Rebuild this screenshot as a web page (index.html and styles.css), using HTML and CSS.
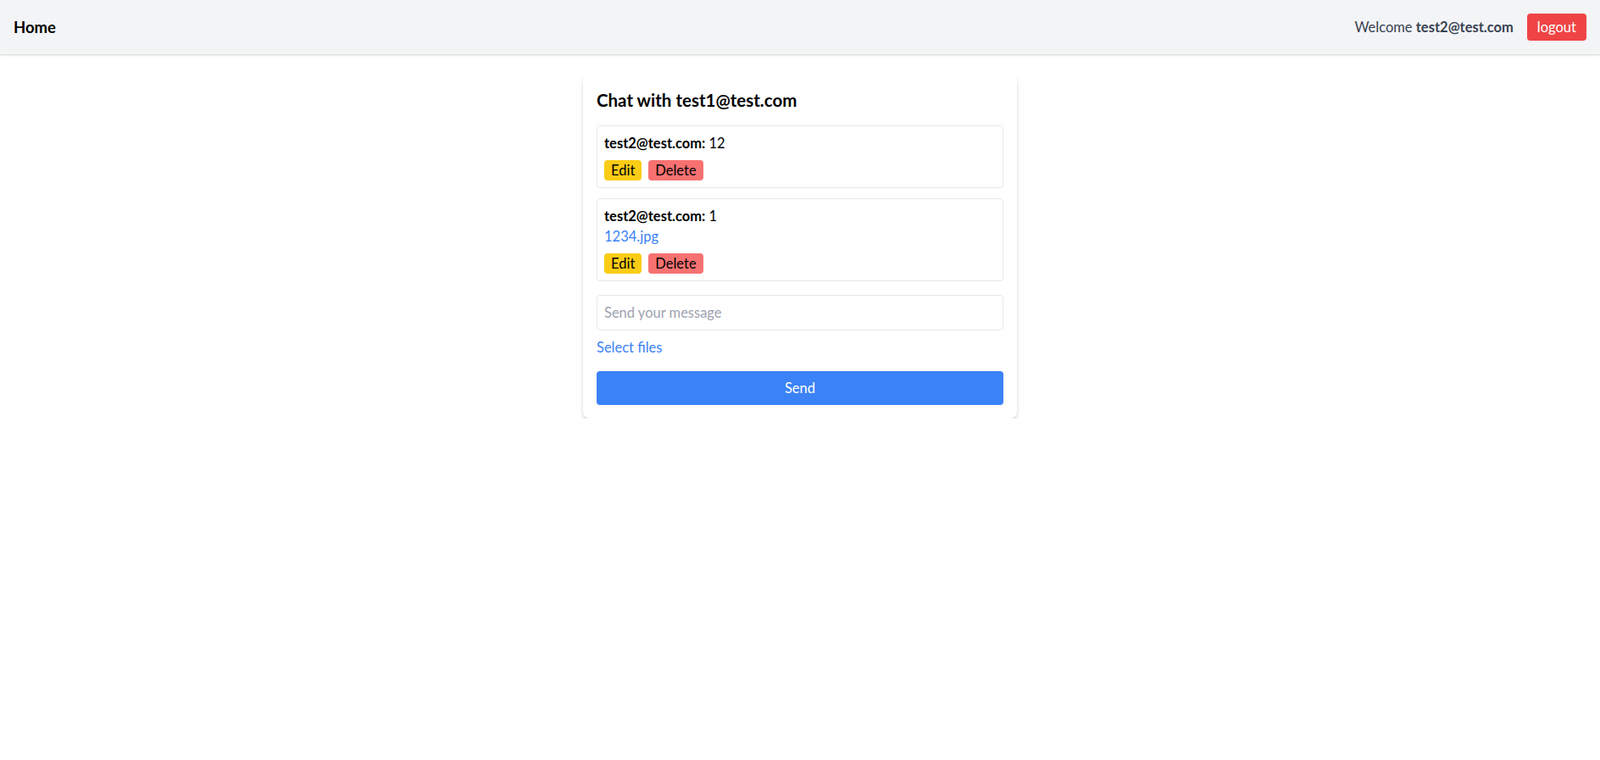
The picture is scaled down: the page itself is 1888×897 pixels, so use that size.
FILE: index.html
```html
<!DOCTYPE html>
<html lang="en">
<head>
<meta charset="utf-8">
<title>Chat</title>
<link rel="stylesheet" href="styles.css">
</head>
<body>
<header class="topbar">
  <a class="brand" href="#">Home</a>
  <div class="user">
    <span class="welcome">Welcome <strong>test2@test.com</strong></span>
    <button class="btn-logout">logout</button>
  </div>
</header>
<main class="main">
  <section class="card">
    <h2 class="title">Chat with test1@test.com</h2>
    <div class="messages">
      <div class="message">
        <div class="line"><strong>test2@test.com:</strong> 12</div>
        <div class="actions">
          <button class="btn btn-edit">Edit</button>
          <button class="btn btn-delete">Delete</button>
        </div>
      </div>
      <div class="message">
        <div class="line"><strong>test2@test.com:</strong> 1</div>
        <a class="file" href="#">1234.jpg</a>
        <div class="actions">
          <button class="btn btn-edit">Edit</button>
          <button class="btn btn-delete">Delete</button>
        </div>
      </div>
    </div>
    <input class="input" type="text" placeholder="Send your message">
    <div class="select"><span class="select-link">Select files</span></div>
    <button class="btn-send">Send</button>
  </section>
</main>
</body>
</html>
```
FILE: styles.css
```css
* { box-sizing: border-box; }
html, body { margin: 0; padding: 0; }
body {
  font-family: Lato, "Noto Sans", sans-serif;
  font-size: 16.5px;
  line-height: 24px;
  color: #000;
  background: #fff;
}
button, input { font-family: inherit; font-size: 16.5px; line-height: 24px; }

.topbar {
  height: 64px;
  background: #f3f4f6;
  box-shadow: 0 1px 3px rgba(0,0,0,0.12), 0 1px 2px rgba(0,0,0,0.08);
  display: flex;
  align-items: center;
  justify-content: space-between;
  padding: 0 16px;
}
.brand {
  font-size: 18.5px;
  line-height: 28px;
  font-weight: 700;
  color: #000;
  text-decoration: none;
}
.user { display: flex; align-items: center; }
.welcome { color: #374151; margin-right: 16px; }
.welcome strong { font-weight: 700; }
.btn-logout {
  background: #ef4444;
  color: #fff;
  border: none;
  border-radius: 4px;
  height: 32px;
  padding: 0 12px;
}

.main { display: flex; justify-content: center; padding-top: 24px; }
.card {
  width: 512px;
  background: #fff;
  border-radius: 8px;
  box-shadow: 0 4px 6px -1px rgba(0,0,0,0.14), 0 2px 4px -1px rgba(0,0,0,0.08), 0 0 2px rgba(0,0,0,0.04);
  padding: 16px;
}
.title {
  margin: 0 0 16px;
  font-size: 20.5px;
  line-height: 28px;
  font-weight: 700;
}
.messages { display: flex; flex-direction: column; gap: 12px; margin-bottom: 16px; }
.message {
  border: 1px solid #e5e7eb;
  border-radius: 4px;
  padding: 8px;
}
.line strong { font-weight: 700; }
.file { display: block; color: #3b82f6; text-decoration: none; }
.actions { display: flex; gap: 8px; margin-top: 8px; }
.btn {
  border: none;
  border-radius: 4px;
  padding: 0 8px;
  height: 24px;
  color: #000;
}
.btn-edit { background: #facc15; }
.btn-delete { background: #f87171; }

.input {
  display: block;
  width: 100%;
  border: 1px solid #e5e7eb;
  border-radius: 4px;
  padding: 8px;
  outline: none;
  color: #000;
}
.input::placeholder { color: #9ca3af; }
.select { margin-top: 8px; }
.select-link { color: #3b82f6; }
.btn-send {
  display: block;
  width: 100%;
  margin-top: 16px;
  background: #3b82f6;
  color: #fff;
  border: none;
  border-radius: 4px;
  padding: 8px;
}
```
